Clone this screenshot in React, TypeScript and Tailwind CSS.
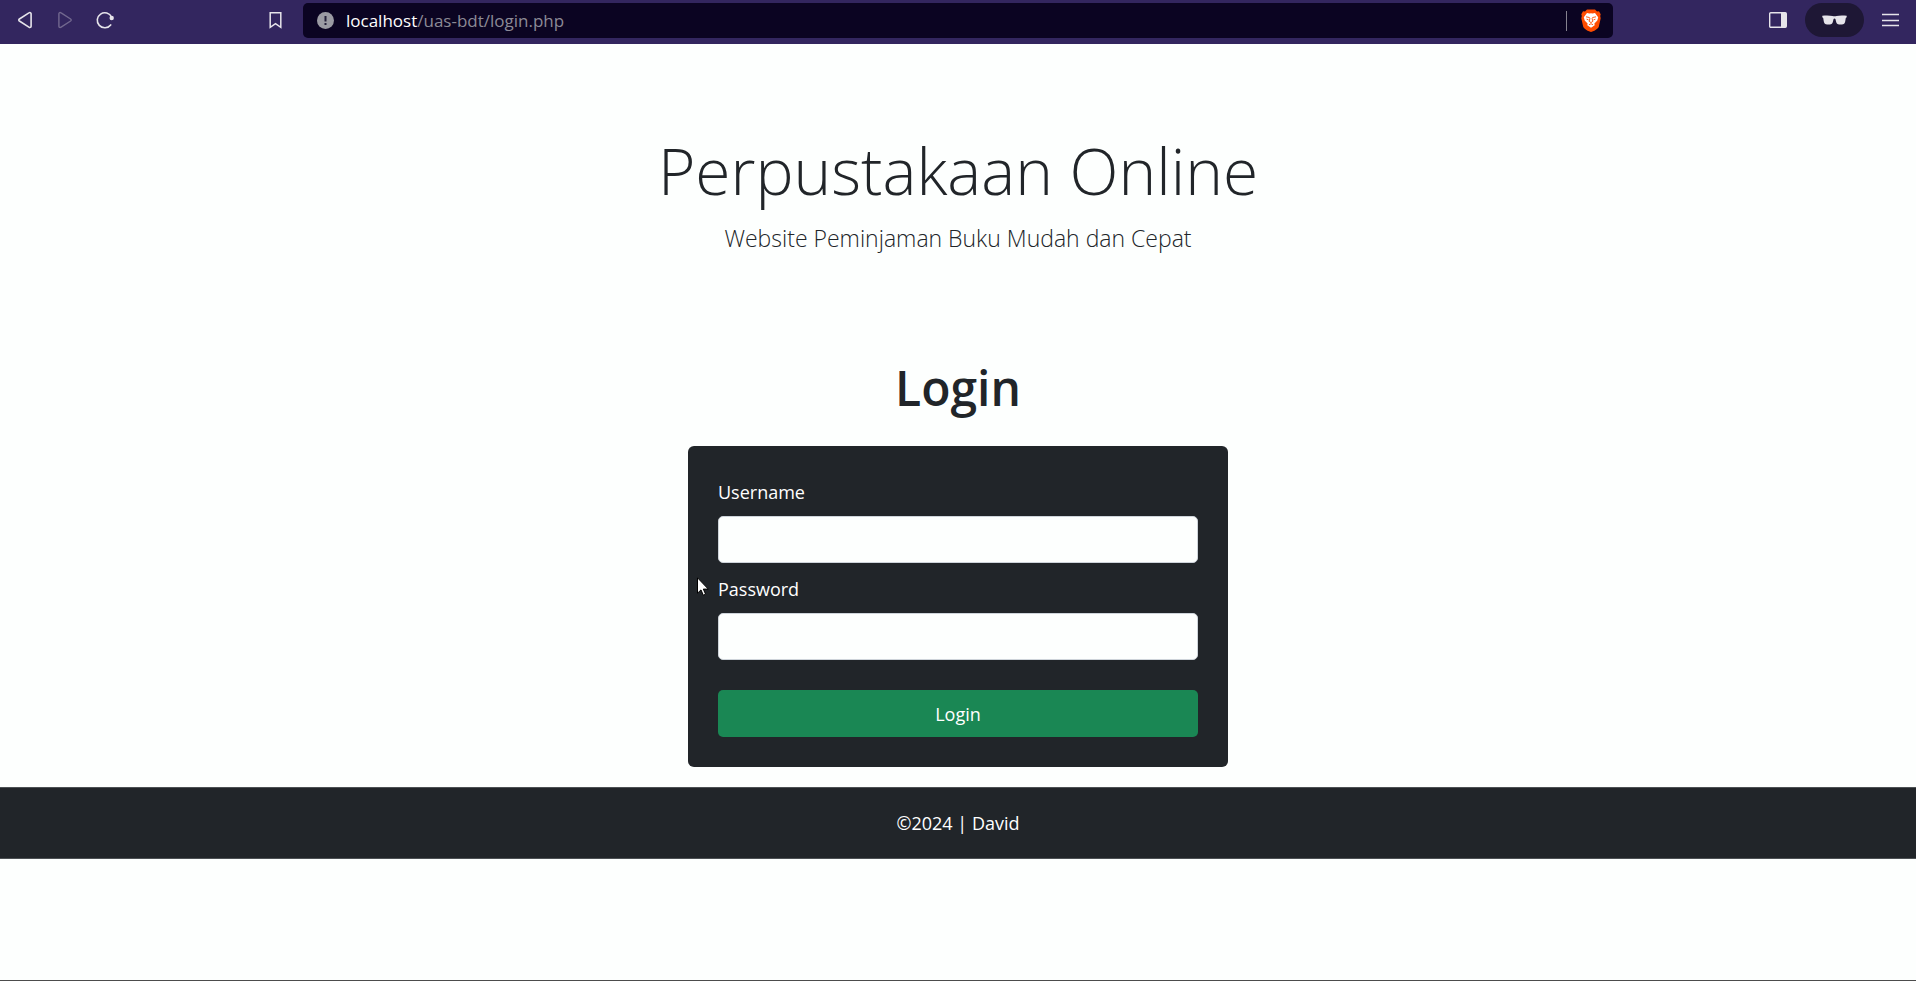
import React from "react";

function BrowserBar() {
  return (
    <header className="flex h-11 items-start bg-[#33265f] text-[#e6e4ea] font-['Open_Sans','Noto_Sans',sans-serif]">
      <nav aria-label="Browser" className="flex h-10 w-[303px] shrink-0 items-center justify-between pr-[20px] pl-[16px]">
        <div className="flex gap-[22px]">
          <button aria-label="Back" className="size-[18px]">
            <svg viewBox="0 0 18 18" className="size-[18px]" fill="none" stroke="currentColor" strokeWidth="1.6" strokeLinejoin="round">
              <path d="M12.9 1.9c1-.7 2.200-.3 2.200.9v12.400c0 1.200-1.200 1.600-2.200.9L3.400 10c-.8-.6-.8-1.400 0-2z" />
            </svg>
          </button>
          <button aria-label="Forward" className="size-[18px] text-[#72688f]">
            <svg viewBox="0 0 18 18" className="size-[18px]" fill="none" stroke="currentColor" strokeWidth="1.4" strokeLinejoin="round">
              <path d="M5.100 1.900c-1-.7-2.200-.3-2.200.9v12.400c0 1.200 1.200 1.600 2.200.9L14.600 10c.8-.6.8-1.400 0-2z" />
            </svg>
          </button>
          <button aria-label="Reload" className="size-[18px]">
            <svg viewBox="0 0 18 18" className="size-[18px]" fill="none" stroke="currentColor" strokeWidth="1.6" strokeLinecap="round">
              <path d="M14.700 13.900A7.500 7.500 0 1 1 15.600 6.200" />
              <circle cx="15.700" cy="7" r="2.200" fill="currentColor" stroke="none" />
            </svg>
          </button>
        </div>
        <button aria-label="Bookmark" className="h-[18px] w-[15px]">
          <svg viewBox="0 0 15 18" className="h-[18px] w-[15px]" fill="none" stroke="currentColor" strokeWidth="1.5">
            <path d="M2.200 1.700h10.600v14.600l-5.300-3.600-5.300 3.600z" />
          </svg>
        </button>
      </nav>
      <div className="mt-[3px] flex h-[35px] min-w-0 flex-1 items-center rounded-[5px] bg-[#0b0422] pr-[12px] pl-[14px]">
        <svg viewBox="0 0 17 17" className="mr-[12px] size-[17px] shrink-0" aria-hidden="true">
          <circle cx="8.500" cy="8.500" r="8.500" fill="#9b9ba3" />
          <path d="M7.500 4h2v5.500h-2zM7.500 11h2v2h-2z" fill="#24203a" />
        </svg>
        <p className="min-w-0 flex-1 truncate text-[17px] leading-[24px] text-[#8b8a96]">
          <span className="text-white">localhost</span>/uas-bdt/login.php
        </p>
        <span className="mr-[14px] h-5 w-px bg-[#85828f]" />
        <button aria-label="Brave Shields" className="h-[23px] w-5">
          <svg viewBox="0 0 20 23" className="h-[23px] w-5">
            <path d="M6 .5h8l2 2 2-.2 1.700 3-.5 1.700.5 2.200-1.900 8.600c-.4 1.300-2.400 2.600-4.400 3.900L10 23l-3.400-1.300c-2-1.300-4-2.600-4.400-3.900L.3 9.200.8 7 .3 5.300l1.700-3 2 .2z" fill="#ff4c00" />
            <path d="M6 4l2.500.6L10 4.300l1.500.3L14 4l3.200 4.200-.9 3.300-2.900 3 .3 1.800L10 18.800l-3.700-2.500.3-1.800-2.900-3-.9-3.300z" fill="#fff" />
            <path d="M5 7.800l3.400.7.500 1.200-.8 2.600 1.900 1.300 1.900-1.300-.8-2.600.5-1.200 3.400-.7M5.600 10.200l1.900.6M14.400 10.200l-1.900.6M7.900 15.800L10 14.700l2.100 1.100" fill="none" stroke="#ff4c00" strokeWidth=".9" />
          </svg>
        </button>
      </div>
      <div className="flex h-10 w-[303px] shrink-0 items-center justify-end pr-[17px]">
        <button aria-label="Sidebar" className="mr-[18px] h-4 w-[18px]">
          <svg viewBox="0 0 18 16" className="h-4 w-[18px]">
            <rect x=".7" y=".7" width="16.600" height="14.600" rx="1" fill="none" stroke="currentColor" strokeWidth="1.400" />
            <path d="M12 1h5v14h-5z" fill="currentColor" />
          </svg>
        </button>
        <button aria-label="Private window" className="mr-[18px] flex h-[34px] w-[59px] items-center justify-center rounded-full bg-[#1e1735]">
          <svg viewBox="0 0 25 10" className="h-[10px] w-[25px]" fill="currentColor">
            <path d="M.3.700C4 .2 8 .3 10.500.9q2 .5 4 0C17 .3 21 .2 24.700.7v1.600l-.9.600-.6 3.600c-.3 2-1.400 2.900-3.400 2.900h-2.600c-1.800 0-2.600-.9-3.100-2.700l-.6-2.400c-.3-1-1.700-1-2 0l-.6 2.400c-.5 1.800-1.300 2.700-3.100 2.700H5.200c-2 0-3.100-.9-3.400-2.900l-.6-3.600-.9-.6z" />
          </svg>
        </button>
        <button aria-label="Menu" className="h-[14px] w-[17px]">
          <svg viewBox="0 0 17 14" className="h-[14px] w-[17px]" stroke="currentColor" strokeWidth="1.500">
            <path d="M0 1.500h17M0 7.500h17M0 12.500h17" />
          </svg>
        </button>
      </div>
    </header>
  );
}

function Field({ id, label, type }: { id: string; label: string; type: string }) {
  return (
    <div>
      <label htmlFor={id} className="block pb-[8px] text-[18px] leading-[32px]">
        {label}
      </label>
      <input id={id} type={type} className="block h-[47px] w-full rounded-[5px] border border-[#ced4da] bg-[#fdfffe] px-4 text-[18px] text-[#212529]" />
    </div>
  );
}

export default function App() {
  return (
    <div className="flex min-h-screen flex-col border-b border-[#4c4c4c] bg-[#fdfffe] text-[#212529]">
      <BrowserBar />
      <main className="flex flex-col items-center px-4 font-['Open_Sans','Noto_Sans',sans-serif]">
        <h1 className="mt-[85px] text-center text-[64px] leading-[84px] font-light">Perpustakaan Online</h1>
        <p className="mt-[6px] text-center text-[23px] leading-[38px] font-light">Website Peminjaman Buku Mudah dan Cepat</p>
        <h2 className="mt-[101px] text-center text-[48px] leading-[60px] font-semibold">Login</h2>
        <form className="relative mt-[28px] w-full max-w-[540px] rounded-[6px] bg-[#212529] p-[30px] text-white" onSubmit={(e) => e.preventDefault()}>
          <div className="flex flex-col gap-[10px]">
            <Field id="username" label="Username" type="text" />
            <Field id="password" label="Password" type="password" />
          </div>
          <button type="submit" className="mt-[30px] block h-[47px] w-full rounded-[5px] bg-[#1a8754] text-[18px] leading-[30px]">
            Login
          </button>
          <svg viewBox="0 0 12 19" className="absolute top-[131px] left-[9px] h-[19px] w-3" aria-hidden="true">
            <path d="M.5 .8v15.400l3.500-3.300 2.300 5.300 2.300-1-2.300-5.100h5z" fill="#fff" stroke="#000" />
          </svg>
        </form>
      </main>
      <footer className="mt-[20px] border-y border-[#4d5154] bg-[#212529] py-5 text-center font-['Open_Sans','Noto_Sans',sans-serif] text-[18px] leading-[30px] text-white">
        ©2024 | David
      </footer>
    </div>
  );
}
